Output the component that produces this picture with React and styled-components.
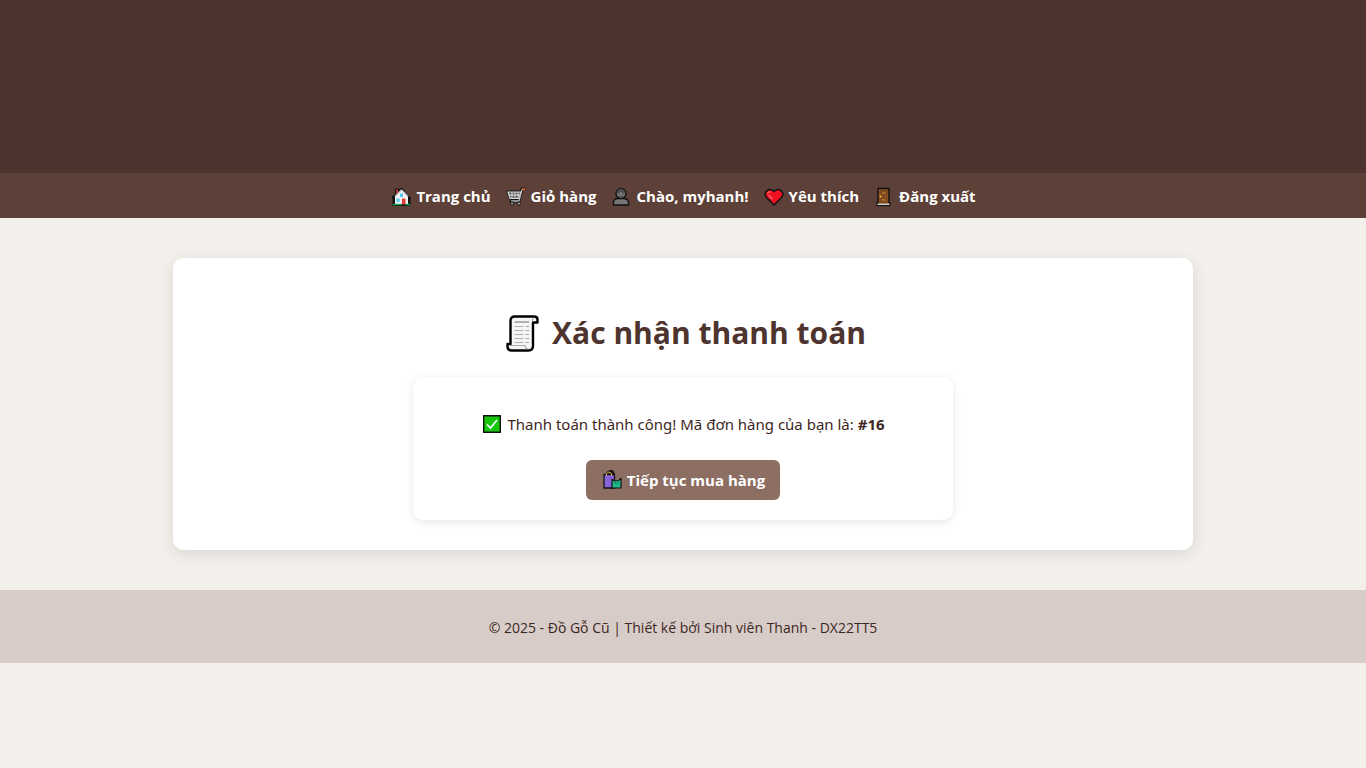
import React from 'react';
import styled, { createGlobalStyle } from 'styled-components';

const GlobalStyle = createGlobalStyle`
  *, *::before, *::after { box-sizing: border-box; }
  body {
    margin: 0;
    background: #f3efea;
    color: #3e2723;
    font-family: 'Segoe UI', 'Open Sans', 'Noto Sans', sans-serif;
    font-size: 15px;
    line-height: 21px;
  }
`;

const Banner = styled.header`
  height: 173px;
  background: #4e342e;
`;

const Nav = styled.nav`
  display: flex;
  flex-wrap: wrap;
  justify-content: center;
  gap: 14px;
  padding: 12px;
  background: #5d4037;
`;

const NavLink = styled.a`
  display: inline-flex;
  align-items: center;
  gap: 4px;
  padding-top: 2px;
  height: 21px;
  color: #fff;
  font-weight: 700;
  text-decoration: none;
`;

const Glyph = styled.svg`
  flex: none;
  width: ${({ $size }) => $size || 22}px;
  height: ${({ $size }) => $size || 22}px;
`;

const Card = styled.main`
  width: calc(100% - 40px);
  max-width: 1020px;
  margin: 40px auto;
  padding: 52px 30px 30px;
  background: #fff;
  border-radius: 10px;
  box-shadow: 0 4px 15px rgba(0, 0, 0, 0.1);
`;

const Title = styled.h1`
  display: flex;
  align-items: center;
  justify-content: center;
  gap: 8px;
  margin: 0 0 22px;
  color: #4e342e;
  font-size: 30px;
  line-height: 45px;
`;

const Result = styled.section`
  max-width: 540px;
  margin: 0 auto;
  padding: 36px 20px 20px;
  border-radius: 10px;
  text-align: center;
  box-shadow: 0 2px 8px rgba(0, 0, 0, 0.1);
`;

const Message = styled.p`
  display: flex;
  align-items: center;
  justify-content: center;
  gap: 4px;
  margin: 0 0 24px;
  font-family: 'Segoe UI', 'Noto Sans', sans-serif;
  line-height: 23px;
`;

const Button = styled.button`
  display: inline-flex;
  align-items: center;
  gap: 4px;
  height: 40px;
  padding: 0 15px;
  border: 0;
  border-radius: 6px;
  background: #8d6e63;
  color: #fff;
  font: inherit;
  font-weight: 700;
  vertical-align: top;
  cursor: pointer;
`;

const Footer = styled.footer`
  padding: 27px 20px 25px;
  background: #d7ccc8;
  text-align: center;
  font-size: 14px;
`;

const HouseIcon = () => (
  <Glyph viewBox="0 0 22 22" aria-hidden="true">
    <path d="M3 19.5V11.500H2L5.500 7V3H8.500v1.500l3-2.500 9 9.500H20v8z" fill="#111" stroke="#111" strokeLinejoin="round" />
    <path d="M5 10.500l6.500-6.500 6.500 6.500V18H5z" fill="#f3f3f3" />
    <path d="M4.500 10l7-6.500 7 6.500" fill="none" stroke="#c9c9c9" />
    <path d="M6 3.500h2v3L6 8z" fill="#d13438" />
    <path d="M10 7.500h3V11h-3zM6.500 12.500h3V16h-3z" fill="#50c8f0" />
    <path d="M12 12.500h3.500v6H12z" fill="#e23c32" />
    <path d="M3 18.500h8.500m4 0H20" stroke="#16a55a" strokeWidth="1.300" />
  </Glyph>
);

const CartIcon = () => (
  <Glyph viewBox="0 0 22 22" aria-hidden="true">
    <g fill="none" stroke="#111" strokeWidth="3" strokeLinejoin="round" strokeLinecap="round">
      <path d="M19 3h-2l-3 12H6M3 6h13l-2 6H5z" />
    </g>
    <path d="M3 6h13l-2 6.500H5z" fill="#555" stroke="#ddd" strokeWidth="1.200" />
    <path d="M3.500 9H15M7 6v6m3-6v6m3-6v6" stroke="#e2e2e2" />
    <path d="M17 3.500L14 15H6" fill="none" stroke="#bbb" strokeWidth="1.300" />
    <path d="M17 3.300h3" stroke="#e46b35" strokeWidth="2" />
    <circle cx="7" cy="17.500" r="1.600" fill="#aaa" stroke="#111" />
    <circle cx="14" cy="17.500" r="1.600" fill="#aaa" stroke="#111" />
  </Glyph>
);

const PersonIcon = () => (
  <Glyph viewBox="0 0 22 22" aria-hidden="true">
    <path d="M3.500 19v-2.500q0-4 5-4h5q5 0 5 4V19z" fill="#767676" stroke="#111" strokeWidth="1.400" strokeLinejoin="round" />
    <circle cx="11" cy="7.500" r="5" fill="#777" stroke="#111" strokeWidth="1.400" />
    <path d="M6.500 7.500c0-6.500 9-6.500 9 0-2 0-3.500-.5-4.500-2C10 7 8.500 7.500 6.500 7.500z" fill="#4b4b4b" />
    <path d="M8.500 8.500h1m3 0h1M9 10.500q2 1.200 4 0" fill="none" stroke="#444" />
  </Glyph>
);

const HeartIcon = () => (
  <Glyph viewBox="0 0 22 22" aria-hidden="true">
    <path d="M11 19L3.500 11.500C-.5 6.500 6 .8 11 5.500c5-4.700 11.500 1 7.500 6z" fill="#ee1122" stroke="#111" strokeWidth="1.500" strokeLinejoin="round" />
    <path d="M4.500 7.500q1-2 3-1.500M5.500 9l4 4" fill="none" stroke="#ff6a70" strokeWidth="1.300" />
  </Glyph>
);

const DoorIcon = () => (
  <Glyph viewBox="0 0 22 22" aria-hidden="true">
    <path d="M5 2.500h11v14.500h1v2.500H4v-2.500h1z" fill="#8a5025" stroke="#111" strokeWidth="1.400" strokeLinejoin="round" />
    <path d="M8 5h5.500v4H8zm0 7h5.500v4H8z" fill="#a4652f" stroke="#6e3c17" />
    <path d="M4.500 18.300h12" stroke="#ccc" strokeWidth="1.500" />
    <circle cx="7.500" cy="10.500" r="1" fill="#ffc83d" />
  </Glyph>
);

const ReceiptIcon = () => (
  <Glyph viewBox="0 0 44 44" $size={44} aria-hidden="true">
    <path d="M10.500 33V10q0-4.500 4.500-4.500h19q3.500 0 3.500 3v3H33V35q0 4.500-4.500 4.500h-17q-4 0-4-4V33z" fill="#f5f5f5" stroke="#000" strokeWidth="2.400" strokeLinejoin="round" />
    <path d="M9 34.500h16q.5 3.500 3.500 3.500" fill="none" stroke="#aaa" strokeWidth="1.200" />
    <path d="M32.500 10.500V8.500q.3-1.500 2-1.500" fill="none" stroke="#aaa" strokeWidth="1.200" />
    <path d="M14.500 11h14.500" stroke="#b0b0b0" strokeWidth="2" />
    <path d="M14.500 15.500h9m2 0h3.500M14.500 19.500h9m2 0h3.500M14.500 23.500h9m2 0h3.500M14.500 27.500h9m2 0h3.500M14.500 31.500h9m2 0h3.500" stroke="#b0b0b0" strokeWidth="1.200" />
  </Glyph>
);

const CheckIcon = () => (
  <Glyph viewBox="0 0 22 22" aria-hidden="true">
    <path d="M2.700 1.700h16.600v16.600H2.700z" fill="#16c60c" stroke="#111" strokeWidth="1.400" />
    <path d="M6 10.500L9.500 14 16 6" fill="none" stroke="#fff" strokeWidth="1.600" />
  </Glyph>
);

const BagsIcon = () => (
  <Glyph viewBox="0 0 22 22" aria-hidden="true">
    <path d="M6 6V4q3-4 5 0v2m-3-1V3q4-3 5 2" fill="none" stroke="#111" strokeWidth="1.500" />
    <path d="M3 5.500h10.500v13.500H3z" fill="#8764db" stroke="#111" strokeWidth="1.300" />
    <path d="M5.500 7V5q2.500-4 5 0v2" fill="none" stroke="#d5b04c" />
    <path d="M11 10.500l3 1.500 3.500-.500 2.500-2V19h-9z" fill="#20b98c" stroke="#111" strokeWidth="1.200" />
    <path d="M13.500 13q2 4 4 0" fill="none" stroke="#087a58" />
  </Glyph>
);

const links = [
  { label: 'Trang chủ', Icon: HouseIcon },
  { label: 'Giỏ hàng', Icon: CartIcon },
  { label: 'Chào, myhanh!', Icon: PersonIcon },
  { label: 'Yêu thích', Icon: HeartIcon },
  { label: 'Đăng xuất', Icon: DoorIcon },
];

export default function App() {
  return (
    <>
      <GlobalStyle />
      <Banner />
      <Nav>
        {links.map(({ label, Icon }) => (
          <NavLink href="#" key={label}><Icon />{label}</NavLink>
        ))}
      </Nav>
      <Card>
        <Title><ReceiptIcon />Xác nhận thanh toán</Title>
        <Result>
          <Message>
            <CheckIcon />
            <span>Thanh toán thành công! Mã đơn hàng của bạn là: <strong>#16</strong></span>
          </Message>
          <Button type="button"><BagsIcon />Tiếp tục mua hàng</Button>
        </Result>
      </Card>
      <Footer>© 2025 - Đồ Gỗ Cũ | Thiết kế bởi Sinh viên Thanh - DX22TT5</Footer>
    </>
  );
}
